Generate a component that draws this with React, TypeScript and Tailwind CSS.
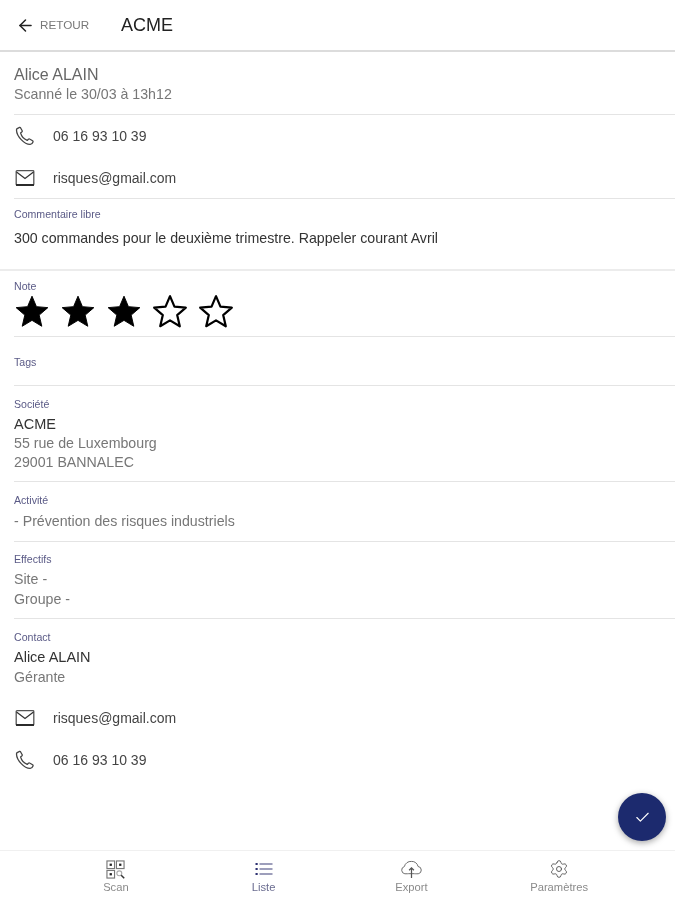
import React from "react";
import { ArrowLeft, Check, Settings } from "lucide-react";

const Star = ({ filled }: { filled: boolean }) => (
  <svg viewBox="0 0 24 24" className="w-[38px] h-[38px] mr-[8px] shrink-0">
    <path
      d="M12 17.27 18.18 21l-1.64-7.03L22 9.24l-7.19-.61L12 2 9.19 8.63 2 9.24l5.46 4.73L5.82 21z"
      fill={filled ? "#000" : "#fff"}
      stroke="#000"
      strokeWidth={filled ? 0.6 : 1.4}
      strokeLinejoin="round"
    />
  </svg>
);

const PhoneIcon = () => (
  <svg viewBox="0 0 20 20" className="w-[20px] h-[20px]" fill="none" stroke="#444" strokeWidth="1.3" strokeLinejoin="round">
    <path d="M2.2 2.6 4.6 1.4c.4-.2.7 0 .9.3l1.7 3c.2.4.1.7-.2 1L5.6 6.9c.7 2.9 3.6 6.3 6.6 7.5l1.4-1.3c.3-.3.7-.3 1-.1l3 1.7c.5.3.6.7.4 1.2-.5 1.3-1.4 2.4-2.8 2.5C9.4 18.6 1.6 10.3 1.5 4c0-.6.2-1 .7-1.4z" />
  </svg>
);

const MailIcon = () => (
  <svg viewBox="0 0 20 18" className="w-[20px] h-[18px]" fill="none" stroke="#555" strokeWidth="1.3">
    <rect x="1.2" y="1.7" width="17.6" height="14.3" rx="0.8" />
    <path d="M1.5 3 10 9.4 18.5 3" stroke="#333" />
    <path d="M1 16h18" strokeWidth="1.8" stroke="#222" />
  </svg>
);

const QrIcon = () => (
  <svg viewBox="0 0 20 20" className="w-[19px] h-[19px]" fill="none" stroke="#777" strokeWidth="1.2">
    <rect x="1" y="1" width="8" height="8" />
    <rect x="11" y="1" width="8" height="8" />
    <rect x="1" y="11" width="8" height="8" />
    <rect x="3.8" y="3.8" width="2.4" height="2.4" fill="#222" stroke="none" />
    <rect x="13.8" y="3.8" width="2.4" height="2.4" fill="#222" stroke="none" />
    <rect x="3.8" y="13.8" width="2.4" height="2.4" fill="#222" stroke="none" />
    <circle cx="14" cy="14" r="2.6" stroke="#aaa" />
    <path d="m16 16 3.2 3.2" stroke="#333" strokeWidth="1.6" />
  </svg>
);

const ListIcon = () => (
  <svg viewBox="0 0 18 14" className="w-[18px] h-[14px]" fill="none">
    <g fill="#2f3272">
      <rect x="0.5" y="1" width="2.2" height="2" />
      <rect x="0.5" y="6" width="2.2" height="2" />
      <rect x="0.5" y="11" width="2.2" height="2" />
    </g>
    <path d="M4.5 2h13M4.5 7h13M4.5 12h13" stroke="#3c3f78" strokeWidth="1.2" />
  </svg>
);

const CloudIcon = () => (
  <svg viewBox="0 0 24 20" className="w-[23px] h-[19px]" fill="none" stroke="#666" strokeWidth="1">
    <path d="M6.2 14.5H5a3.9 3.9 0 0 1-.5-7.6A7 7 0 0 1 12 1.5a6.6 6.6 0 0 1 6.9 5.3 3.9 3.9 0 0 1 .2 7.7h-1.5c-1.6 0-2.2 0-2.6-.1H8.800c-.8.1-1.5.1-2.6.1z" />
    <path d="M12 19V9M9.5 10.8 12 8.2l2.5 2.6" stroke="#555" strokeWidth="1.3" />
  </svg>
);

const Label = ({ children }: { children: React.ReactNode }) => (
  <div className="text-[10.6px] leading-[14px] text-[#5a5a86]">{children}</div>
);

const ContactRow = ({ icon, text }: { icon: React.ReactNode; text: string }) => (
  <div className="h-[42px] flex items-center">
    <div className="w-[39px] pl-[1px] flex items-center">{icon}</div>
    <span className="text-[14px] text-[#444]">{text}</span>
  </div>
);

const NavItem = ({
  icon,
  label,
  color = "text-[#8a8a8a]",
}: {
  icon: React.ReactNode;
  label: string;
  color?: string;
}) => (
  <div className={`flex-1 flex flex-col items-center pt-[8px] ${color}`}>
    <div className="h-[20px] flex items-center">{icon}</div>
    <span className="text-[11.2px] leading-[14px] mt-[1px]">{label}</span>
  </div>
);

export default function App() {
  return (
    <div className="relative w-[675px] h-[900px] bg-white overflow-hidden blur-[0.5px] font-['Liberation_Sans',sans-serif]">
      <header className="h-[52px] flex items-center border-b-2 border-[#dcdcdc] pl-[16px]">
        <ArrowLeft size={19} strokeWidth={1.9} className="text-[#222]" />
        <span className="ml-[5px] text-[11.7px] text-[#777] w-[81px]">RETOUR</span>
        <span className="text-[18px] text-[#222]">ACME</span>
      </header>

      <div className="pl-[14px]">
        <section className="h-[63px] pt-[13px] border-b border-[#e4e4e4]">
          <div className="text-[16px] leading-[20px] text-[#666]">Alice ALAIN</div>
          <div className="text-[14.2px] leading-[18px] text-[#777]">Scanné le 30/03 à 13h12</div>
        </section>
        <section className="h-[84px] border-b border-[#e4e4e4]">
          <ContactRow icon={<PhoneIcon />} text="06 16 93 10 39" />
          <ContactRow icon={<MailIcon />} text="risques@gmail.com" />
        </section>
      </div>

      <section className="h-[72px] pl-[14px] pt-[8px] border-b-2 border-[#ececec]">
        <Label>Commentaire libre</Label>
        <div className="mt-[8px] text-[14.2px] leading-[18px] text-[#333]">
          300 commandes pour le deuxième trimestre. Rappeler courant Avril
        </div>
      </section>

      <div className="pl-[14px]">
        <section className="h-[66px] pt-[8px] border-b border-[#e4e4e4]">
          <Label>Note</Label>
          <div className="flex -ml-[1px]">
            <Star filled />
            <Star filled />
            <Star filled />
            <Star filled={false} />
            <Star filled={false} />
          </div>
        </section>
        <section className="h-[49px] pt-[18px] border-b border-[#e4e4e4]">
          <Label>Tags</Label>
        </section>
        <section className="h-[96px] pt-[11px] border-b border-[#e4e4e4]">
          <Label>Société</Label>
          <div className="mt-[4px] text-[14.5px] leading-[19px] text-[#333]">ACME</div>
          <div className="text-[14.2px] leading-[19px] text-[#777]">55 rue de Luxembourg</div>
          <div className="text-[14.2px] leading-[19px] text-[#777]">29001 BANNALEC</div>
        </section>
        <section className="h-[60px] pt-[11px] border-b border-[#e4e4e4]">
          <Label>Activité</Label>
          <div className="mt-[5px] text-[14.2px] leading-[19px] text-[#777]">- Prévention des risques industriels</div>
        </section>
        <section className="h-[77px] pt-[10px] border-b border-[#e4e4e4]">
          <Label>Effectifs</Label>
          <div className="mt-[3px] text-[14.2px] leading-[20px] text-[#777]">Site -</div>
          <div className="text-[14.2px] leading-[20px] text-[#777]">Groupe -</div>
        </section>
        <section className="pt-[11px]">
          <Label>Contact</Label>
          <div className="mt-[3px] text-[14.5px] leading-[20px] text-[#333]">Alice ALAIN</div>
          <div className="text-[14.2px] leading-[20px] text-[#777]">Gérante</div>
          <div className="h-[10px]" />
          <ContactRow icon={<MailIcon />} text="risques@gmail.com" />
          <ContactRow icon={<PhoneIcon />} text="06 16 93 10 39" />
        </section>
      </div>

      <button className="absolute left-[618px] top-[793px] w-[48px] h-[48px] rounded-full bg-[#1c2a6e] shadow-[0_2px_6px_rgba(0,0,0,0.35)] flex items-center justify-center text-white">
        <Check size={17} strokeWidth={1.6} />
      </button>

      <nav className="absolute left-0 right-0 bottom-0 h-[50px] border-t border-[#f0f0f0] bg-white flex px-[42px]">
        <NavItem icon={<QrIcon />} label="Scan" />
        <NavItem icon={<ListIcon />} label="Liste" color="text-[#6a6c90]" />
        <NavItem icon={<CloudIcon />} label="Export" />
        <NavItem icon={<Settings size={20} strokeWidth={1.1} className="text-[#555]" />} label="Paramètres" />
      </nav>
    </div>
  );
}
